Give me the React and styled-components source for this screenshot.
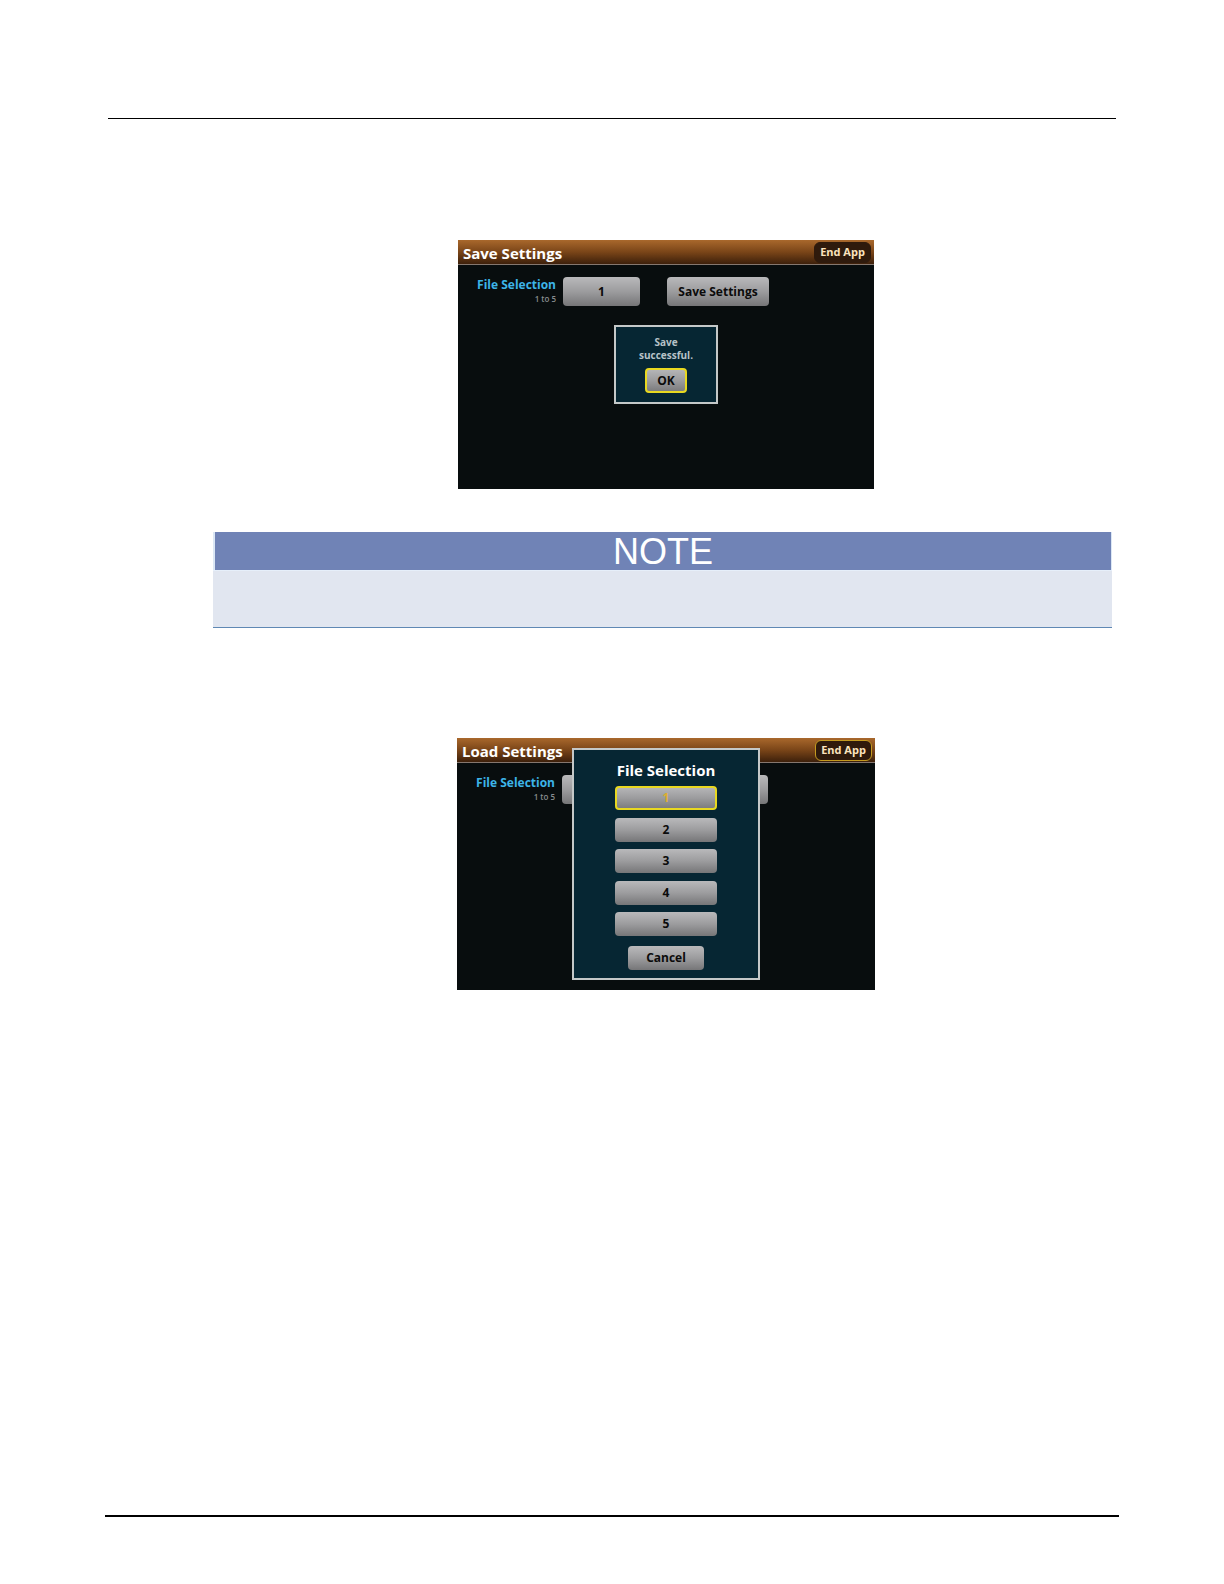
import React from 'react'
import styled, { createGlobalStyle } from 'styled-components'

const files = [1, 2, 3, 4, 5]

const Screen = ({ id, title, action, endFocused, tall, children }) => (
  <StyledScreen $tall={tall}>
    <TitleBar>
      <h2>{title}</h2>
      <EndButton type="button" $focused={endFocused}>
        End App
      </EndButton>
    </TitleBar>
    <Controls>
      <FileLabel htmlFor={id}>
        File Selection
        <small>1 to 5</small>
      </FileLabel>
      <FileButton type="button" id={id}>
        1
      </FileButton>
      <ActionButton type="button">{action}</ActionButton>
    </Controls>
    <Overlay>{children}</Overlay>
  </StyledScreen>
)

const App = () => {
  return (
    <Page>
      <GlobalStyle />
      <Header />
      <main>
        <Figure>
          <Screen id="save-file" title="Save Settings" action="Save Settings">
            <Message role="dialog" aria-label="Save">
              <p>Save successful.</p>
              <OkButton type="button">OK</OkButton>
            </Message>
          </Screen>
        </Figure>
        <Note>
          <h3>NOTE</h3>
          <div />
        </Note>
        <Figure>
          <Screen
            id="load-file"
            title="Load Settings"
            action="Load Settings"
            endFocused
            tall
          >
            <Picker role="dialog" aria-label="File Selection">
              <h3>File Selection</h3>
              <Options>
                {files.map((file) => (
                  <Option key={file} type="button" $selected={file === 1}>
                    {file}
                  </Option>
                ))}
              </Options>
              <CancelButton type="button">Cancel</CancelButton>
            </Picker>
          </Screen>
        </Figure>
      </main>
      <Footer />
    </Page>
  )
}

const GlobalStyle = createGlobalStyle`
  * {
    box-sizing: border-box;
    margin: 0;
    padding: 0;
  }
  body {
    background: #fff;
    font-family: 'Open Sans', 'Noto Sans', sans-serif;
  }
  button {
    font-family: inherit;
    cursor: pointer;
  }
`

const Page = styled.div`
  display: flex;
  flex-direction: column;
  min-height: 100vh;
`

const Header = styled.header`
  height: 119px;
  margin: 0 108px;
  border-bottom: 1px solid #000;
`

const Footer = styled.footer`
  margin: auto 105px 67px;
  border-bottom: 2px solid #000;
`

// Figures sit in the text column, right of the margin
const Figure = styled.figure`
  display: flex;
  justify-content: center;
  margin: 0 108px 0 216px;
  padding-top: 121px;

  section + & {
    padding-top: 110px;
  }
`

const StyledScreen = styled.section`
  position: relative;
  width: ${(props) => (props.$tall ? 418 : 416)}px;
  height: ${(props) => (props.$tall ? 252 : 249)}px;
  background: #080d0e;
`

const TitleBar = styled.div`
  display: flex;
  align-items: center;
  justify-content: space-between;
  height: 25px;
  padding: 0 3px 0 5px;
  background: linear-gradient(#a9682c, #7a4518 50%, #3d200b);
  border-bottom: 1px solid #85776f;

  h2 {
    color: #fff;
    font-size: 15px;
    font-weight: 700;
    line-height: 20px;
    padding-top: 2px;
  }
`

const EndButton = styled.button`
  height: 21px;
  width: 57px;
  border: 1px solid ${(props) => (props.$focused ? '#c49a20' : '#2f1a0c')};
  border-radius: 6px;
  background: #2f1a0c;
  color: #fbe3bd;
  font-size: 11px;
  font-weight: 700;
  line-height: 16px;
`

const Controls = styled.div`
  display: flex;
  padding-top: 12px;
`

const FileLabel = styled.label`
  display: flex;
  flex-direction: column;
  align-items: flex-end;
  width: 98px;
  margin-right: 7px;
  color: #3db4e8;
  font-size: 12px;
  font-weight: 700;
  line-height: 16px;

  small {
    color: #8a8d8e;
    font-size: 8px;
    font-weight: 600;
    line-height: 12px;
  }
`

const Button = styled.button`
  border: none;
  border-radius: 4px;
  background: linear-gradient(#b9b9bb, #9c9c9e 50%, #767678) border-box;
  color: #0b0b0b;
  font-size: 12px;
  font-weight: 700;
  line-height: 16px;
`

const FileButton = styled(Button)`
  width: 77px;
  height: 29px;
  margin-right: 27px;
`

const ActionButton = styled(Button)`
  width: 102px;
  height: 29px;
`

const Overlay = styled.div`
  position: absolute;
  inset: 0;
  display: flex;
  align-items: center;
  justify-content: center;
`

const Dialog = styled.div`
  display: flex;
  flex-direction: column;
  align-items: center;
  border: 2px solid #c4c8c8;
  background: #062633;
`

const Message = styled(Dialog)`
  width: 104px;
  height: 79px;
  padding: 9px 16px;
  gap: 6px;

  p {
    color: #b6c2c8;
    font-size: 10px;
    font-weight: 700;
    line-height: 13px;
    text-align: center;
  }
`

const OkButton = styled(Button)`
  width: 42px;
  height: 25px;
  border: 2px solid #e8d820;
`

const Picker = styled(Dialog)`
  width: 188px;
  height: 232px;
  padding-top: 10px;

  h3 {
    color: #fff;
    font-size: 15px;
    font-weight: 700;
    line-height: 20px;
  }
`

const Options = styled.div`
  display: flex;
  flex-direction: column;
  justify-content: space-between;
  height: 150px;
  margin: 6px 0 10px;
`

const Option = styled(Button)`
  width: 102px;
  height: 24px;
  border: ${(props) => (props.$selected ? '2px solid #e8d820' : 'none')};
  color: ${(props) => (props.$selected ? '#dcae30' : '#0b0b0b')};
`

const CancelButton = styled(Button)`
  width: 76px;
  height: 24px;
`

const Note = styled.section`
  margin: 43px 112px 0 213px;
  border-bottom: 1px solid #5f88b4;

  h3 {
    height: 38px;
    border: solid #dbe7f5;
    border-width: 0 1px 0 2px;
    background: #7083b6;
    color: #fff;
    font-family: 'Liberation Sans', Arial, sans-serif;
    font-size: 36px;
    font-weight: 400;
    line-height: 40px;
    text-align: center;
  }
  div {
    height: 57px;
    background: #e1e6f0;
    border-top: 1px solid #e6effa;
  }
`

export default App
